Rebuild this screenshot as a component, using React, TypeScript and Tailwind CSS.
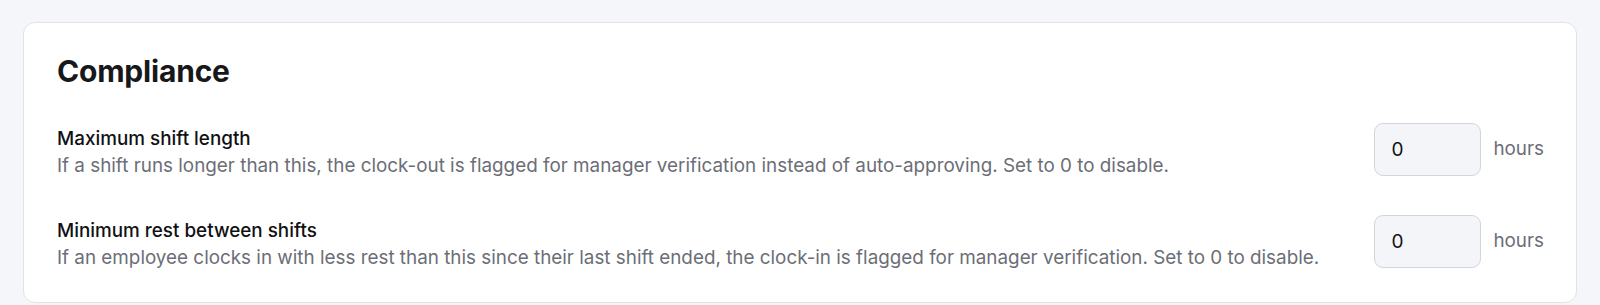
import React from "react";

const rows = [
  {
    label: "Maximum shift length",
    desc: "If a shift runs longer than this, the clock-out is flagged for manager verification instead of auto-approving. Set to 0 to disable.",
  },
  {
    label: "Minimum rest between shifts",
    desc: "If an employee clocks in with less rest than this since their last shift ended, the clock-in is flagged for manager verification. Set to 0 to disable.",
  },
];

export default function App() {
  return (
    <div className="min-h-[305px] bg-[#f5f6f9] px-[23px] pt-[22px] font-['Inter',sans-serif]">
      <div className="rounded-[12px] border border-[#e1e3e8] bg-white pl-[33px] pr-8 pt-[30px] pb-[30px]">
        <h2 className="text-[30px] font-bold leading-[36px] tracking-[-0.2px] text-[#18181b]">
          Compliance
        </h2>
        <div className="mt-[34px] flex flex-col gap-[35px]">
          {rows.map((r) => (
            <div key={r.label} className="flex items-start justify-between">
              <div className="mt-[3px] flex-1">
                <div className="text-[18.85px] font-medium leading-[26px] text-[#111113]">
                  {r.label}
                </div>
                <div className="text-[18.85px] leading-[28px] text-[#6b6e76]">
                  {r.desc}
                </div>
              </div>
              <div className="flex items-center gap-3">
                <input
                  readOnly
                  value="0"
                  className="h-[53px] w-[107px] rounded-[9px] border border-[#d2d5db] bg-[#f4f5f9] px-4 text-[19px] text-[#111113] outline-none"
                />
                <span className="text-[18.85px] text-[#6b6e76]">hours</span>
              </div>
            </div>
          ))}
        </div>
      </div>
    </div>
  );
}
